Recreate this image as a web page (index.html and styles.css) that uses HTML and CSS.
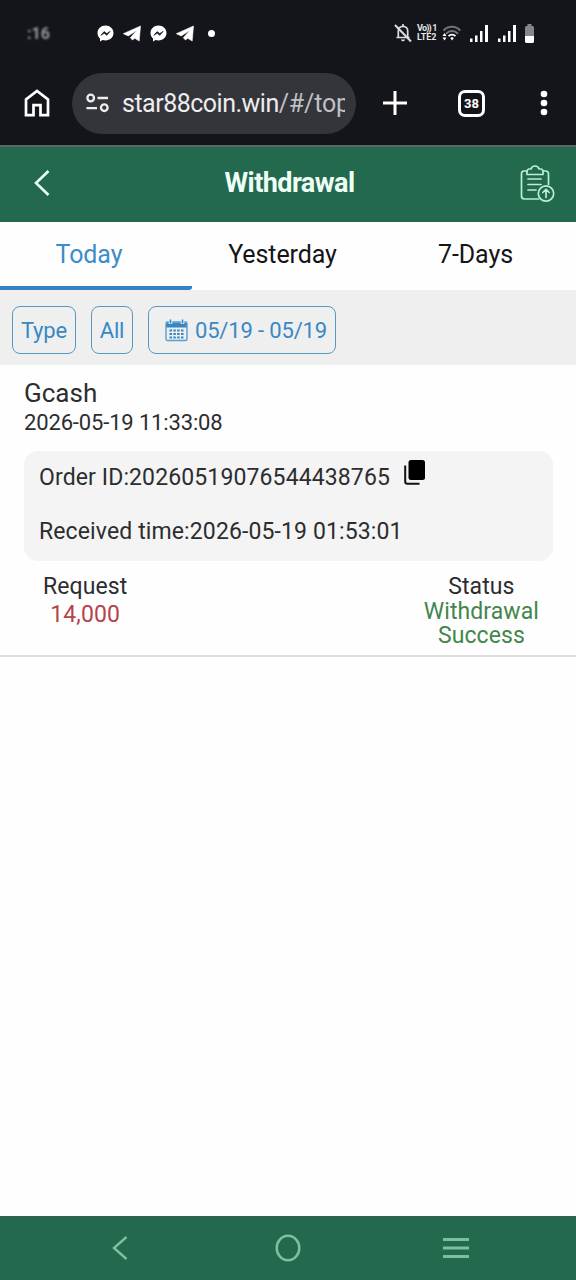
FILE: index.html
```html
<!DOCTYPE html>
<html lang="en">
<head>
<meta charset="utf-8">
<title>Withdrawal</title>
<link rel="stylesheet" href="styles.css">
</head>
<body>
<div class="phone">
  <div class="browser">
    <div class="status-bar">
      <span class="clock">:16</span>
      <div class="notices">
        <svg width="17" height="17" viewBox="0 0 17 17"><path d="M8.500.5C4 .5.5 3.800.5 8c0 2.300 1 4.200 2.500 5.500v3l2.600-1.500c.9.300 1.900.400 2.900.400 4.500 0 8-3.200 8-7.400S13 .5 8.500.5z" fill="#fff"/><path d="M3.800 10.300l3.300-3.700 2.700 2 3.400-2.300-3.300 4-2.700-2z" fill="#16171c" stroke="#16171c" stroke-width=".6"/></svg>
        <svg width="18" height="17" viewBox="0 0 18 17"><path d="M.3 8.700L17.500 1l-1.300 15-4.400-2.700-2.300 1.700-2.200-2.200 6.600-7.500-8.600 5.600z" fill="#fff" stroke="#fff" stroke-width=".6"/></svg>
        <svg width="17" height="17" viewBox="0 0 17 17"><path d="M8.500.5C4 .5.5 3.800.5 8c0 2.300 1 4.200 2.500 5.500v3l2.600-1.500c.9.300 1.900.400 2.900.400 4.500 0 8-3.200 8-7.400S13 .5 8.500.5z" fill="#fff"/><path d="M3.800 10.300l3.300-3.700 2.700 2 3.400-2.300-3.300 4-2.700-2z" fill="#16171c" stroke="#16171c" stroke-width=".6"/></svg>
        <svg width="18" height="17" viewBox="0 0 18 17"><path d="M.3 8.700L17.500 1l-1.300 15-4.400-2.700-2.300 1.700-2.200-2.200 6.600-7.500-8.600 5.600z" fill="#fff" stroke="#fff" stroke-width=".6"/></svg>
        <i class="more-dot"></i>
      </div>
      <div class="signals">
        <svg class="bell" width="18" height="20" viewBox="0 0 18 20" fill="none" stroke="#ddd" stroke-width="1.700"><path d="M4.300 14V8c0-2.700 2-4.600 4.700-4.600s4.700 1.900 4.700 4.600v6M2.500 14.500h13M9 1v2.500"/><path d="M7 16.500h4c0 2.400-4 2.400-4 0z" fill="#ddd" stroke="none"/><path d="M1 2l16 16.500" stroke-width="2"/></svg>
        <span class="volte"><span>Vo)) 1</span><span>LTE2</span></span>
        <svg class="wifi" width="19" height="17" viewBox="0 0 19 17" fill="none"><path d="M1.500 5.500c4.500-5 12.300-5 16.800 0" stroke="#707176" stroke-width="2"/><path d="M4 8.700c3.500-3.600 8.500-3.600 12 0" stroke="#77787d" stroke-width="2"/><path d="M6.500 11.200c2-2 5-2 7 0" stroke="#fff" stroke-width="1.800"/><path d="M8.300 13l1.800-1 1.700 1-1.700 2.500zM.5 11l2-3 2 3zM.5 12.500h4l-2 3z" fill="#fff"/></svg>
        <svg class="bars" width="18" height="17" viewBox="0 0 18 17" fill="#fff"><path d="M0 13.500h2.500V17H0zM5 10.500h2.500V17H5zM10 6h2.500v11H10zM15 0h3v17h-3z"/></svg>
        <svg class="bars bars-two" width="18" height="17" viewBox="0 0 18 17" fill="#fff"><path d="M0 13.500h2.500V17H0zM5 10.500h2.500V17H5zM10 6h2.500v11H10zM15 0h3v17h-3z"/></svg>
        <svg class="battery" width="9" height="19" viewBox="0 0 9 19"><path d="M2.500 0h4v2H8l1 1v9H0V3l1-1h1.500z" fill="#85868a"/><path d="M0 12h9v6l-1 1H1l-1-1z" fill="#fff"/></svg>
      </div>
    </div>
    <div class="toolbar">
      <svg class="home" width="26" height="28" viewBox="0 0 26 28" fill="none" stroke="#fff" stroke-width="2.700"><path d="M2 26.200V10.500L13 2l11 8.500v15.700h-7.500v-10h-7v10z"/></svg>
      <div class="address">
        <svg width="23" height="20" viewBox="0 0 23 20" fill="none" stroke="#eee" stroke-width="2.300"><circle cx="4.700" cy="5" r="3.300"/><path d="M11.500 5H22M.5 15.200H11"/><circle cx="18.300" cy="14.700" r="3.300"/></svg>
        <span class="url">star88coin.win<span class="path">/#/top</span></span>
      </div>
      <svg class="plus" width="24" height="24" viewBox="0 0 24 24" stroke="#fff" stroke-width="3"><path d="M12 0v24M0 12h24"/></svg>
      <span class="tab-count">38</span>
      <svg class="kebab" width="8" height="26" viewBox="0 0 8 26" fill="#fff"><circle cx="4" cy="4" r="3.300"/><circle cx="4" cy="13" r="3.300"/><circle cx="4" cy="22" r="3.300"/></svg>
    </div>
  </div>

  <header class="header">
    <svg class="back" width="16" height="28" viewBox="0 0 16 28" fill="none" stroke="#e4fff2" stroke-width="2.600"><path d="M14.500 2L2 14l12.500 12"/></svg>
    <h1 class="title">Withdrawal</h1>
    <svg class="records" width="35" height="39" viewBox="0 0 35 39" fill="none" stroke="#b9efd3" stroke-width="1.700" stroke-linecap="round" stroke-linejoin="round"><path d="M7 7H4C2 7 1.500 8 1.500 10v22c0 2 1 3 3 3h14M23 7h2.500c2 0 3 1 3 3v10.500"/><path d="M7 10.500V6.500L8.500 5H11c.5-2 2-3 4-3s3.500 1 4 3h2.500L23 6.500v4z"/><path d="M8 15h13M8 20.500h13M8 26h8"/><circle cx="26" cy="29.500" r="7.700"/><path d="M26 33.500v-8M22.800 28.500l3.200-3.200 3.200 3.200"/></svg>
  </header>

  <nav class="tabs">
    <span class="tab active">Today</span>
    <span class="tab">Yesterday</span>
    <span class="tab">7-Days</span>
  </nav>

  <div class="filters">
    <span class="filter type">Type</span>
    <span class="filter all">All</span>
    <span class="filter range">
      <svg width="23" height="23" viewBox="0 0 23 23"><path d="M1 3.500h21v5H1z" fill="#3587c6"/><rect x="1" y="3" width="21" height="18.500" rx="1.500" fill="none" stroke="#5a9dce" stroke-width="1.400"/><path d="M5.500 1v4M17.500 1v4" stroke="#efefef" stroke-width="3.600"/><path d="M5.500.5v4M17.500.5v4" stroke="#3587c6" stroke-width="1.600"/><path d="M4.500 11.500h14M4.500 15h14M4.500 18.500h14" stroke="#3587c6" stroke-width="2" stroke-dasharray="2.500 1.333"/></svg>
      <span>05/19 - 05/19</span>
    </span>
  </div>

  <main class="record">
    <div class="method">Gcash</div>
    <div class="created">2026-05-19 11:33:08</div>
    <div class="details">
      <div class="detail">
        <span>Order ID:20260519076544438765</span>
        <svg class="copy" width="21" height="25" viewBox="0 0 21 25"><path d="M1.200 5.500v16c0 1.500.8 2.300 2.300 2.300h12" fill="none" stroke="#111" stroke-width="2"/><rect x="4.500" y="0" width="16.500" height="20" rx="2.500" fill="#000"/></svg>
      </div>
      <div class="detail received">Received time:2026-05-19 01:53:01</div>
    </div>
    <div class="summary">
      <div class="request"><div class="label">Request</div><div class="amount">14,000</div></div>
      <div class="state"><div class="label">Status</div><div class="success">Withdrawal<br>Success</div></div>
    </div>
  </main>

  <footer class="system-nav">
    <svg width="16" height="26" viewBox="0 0 16 26" fill="none" stroke="#80bda1" stroke-width="2.400"><path d="M14.500 2L2 13l12.500 11"/></svg>
    <svg class="nav-home" width="26" height="28" viewBox="0 0 26 28" fill="none" stroke="#80bda1" stroke-width="2.500"><ellipse cx="13" cy="14" rx="11.300" ry="12.300"/></svg>
    <svg width="26" height="24" viewBox="0 0 26 24" stroke="#80bda1" stroke-width="3"><path d="M0 3.500h26M0 12h26M0 20.500h26"/></svg>
  </footer>
</div>
</body>
</html>
```
FILE: styles.css
```css
* { box-sizing: border-box; }
body { margin: 0; background: #fefefe; font-family: Roboto, "Liberation Sans", sans-serif; color: #2d2d2f; }
svg { display: block; flex: none; }
.phone { width: 576px; height: 1280px; display: flex; flex-direction: column; background: #fefefe; overflow: hidden; }
.browser { height: 145px; flex: none; background: #14151a; }
.status-bar { height: 66px; display: flex; align-items: center; padding-left: 27px; }
.clock { width: 70px; font-size: 16px; font-weight: 700; color: #98999c; filter: blur(1.200px); }
.notices { display: flex; align-items: center; width: 297px; gap: 9px; }
.more-dot { width: 7px; height: 7px; border-radius: 50%; background: #fff; margin-left: 5px; }
.signals { display: flex; align-items: center; }
.bell { margin-right: 5px; }
.volte { width: 21px; margin-right: 4px; display: flex; flex-direction: column; font-size: 9px; line-height: 9px; font-weight: 700; color: #e6e6e6; letter-spacing: -.1px; white-space: nowrap; }
.volte span:first-child { letter-spacing: -.8px; }
.bars { margin-left: 9px; }
.bars-two { margin-left: 10px; }
.battery { margin-left: 9px; }
.toolbar { height: 79px; display: flex; align-items: center; padding: 0 0 5px 24px; }
.address { width: 284px; height: 61px; margin-left: 22px; padding-left: 14px; border-radius: 31px; background: #34353a; display: flex; align-items: center; }
.url { width: 223px; margin-left: 13px; padding-top: 1px; overflow: hidden; white-space: nowrap; font-size: 25px; line-height: 34px; letter-spacing: -.5px; color: #ededf0; }
.path { color: #c0c0c5; letter-spacing: -.2px; }
.plus { margin-left: 27px; }
.tab-count { width: 27px; height: 27px; margin-left: 51px; border: 3px solid #fff; border-radius: 7px; color: #fff; font-size: 13px; font-weight: 700; line-height: 22px; text-align: center; }
.kebab { margin-left: 55px; }
.header { height: 77px; flex: none; border-top: 2px solid #576b64; background: #23694d; display: flex; align-items: center; justify-content: space-between; padding: 0 21px 3px 34px; }
.title { margin: 0 0 0 9px; font-size: 27px; line-height: 34px; font-weight: 700; letter-spacing: -.55px; color: #effff6; }
.tabs { height: 68px; flex: none; display: grid; grid-template-columns: repeat(3, 1fr); background: #fefefe; }
.tab { display: flex; align-items: center; justify-content: center; font-size: 25px; letter-spacing: -.1px; border-bottom: 4px solid transparent; color: #151517; }
.tab.active { color: #3b8dca; border-color: #3581c4; border-radius: 0 0 3px 0; padding-right: 14px; }
.tab:nth-child(2) { padding-right: 11px; }
.tab:nth-child(3) { padding-right: 9px; }
.filters { height: 75px; flex: none; display: flex; align-items: center; gap: 15px; padding: 4px 12px 0; background: #efefef; }
.filter { height: 48px; padding-top: 1px; display: flex; align-items: center; justify-content: center; border: 1px solid #5599c0; border-radius: 8px; color: #3988c4; font-size: 22px; letter-spacing: -.15px; white-space: nowrap; }
.type { width: 64px; }
.all { width: 42px; }
.range { width: 188px; gap: 7px; padding-left: 8px; }
.record { flex: none; height: 292px; padding: 12px 24px 0; border-bottom: 2px solid #dedede; }
.method { font-size: 26px; line-height: 32px; }
.created { font-size: 22px; line-height: 28px; letter-spacing: -.15px; }
.details { height: 110px; margin: 14px -1px 0 0; padding: 7px 15px; background: #f4f4f4; border-radius: 14px; }
.detail { display: flex; height: 38px; align-items: center; gap: 14px; font-size: 23px; letter-spacing: .12px; white-space: nowrap; }
.received { margin-top: 16px; }
.copy { margin-top: -9px; }
.summary { display: flex; justify-content: space-between; padding: 12px 13px 0 19px; font-size: 23px; line-height: 28px; letter-spacing: .08px; text-align: center; }
.amount { color: #b5434a; }
.success { color: #43864c; line-height: 24px; margin-top: -1px; }
.system-nav { height: 64px; flex: none; margin-top: auto; border-top: 1px solid #345f50; background: #23694d; display: flex; align-items: center; justify-content: space-between; padding: 0 107px 1px 112px; }
.nav-home { margin-left: 5px; }
```
